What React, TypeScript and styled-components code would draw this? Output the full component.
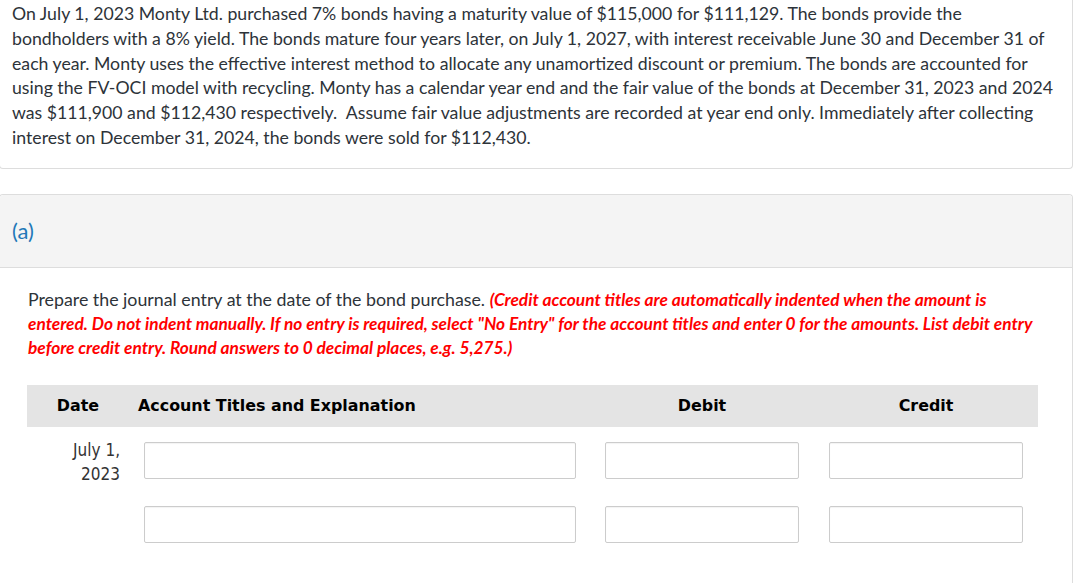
import React from 'react';
import styled, { createGlobalStyle } from 'styled-components';

const GlobalStyle = createGlobalStyle`
  body {
    margin: 0;
    background: #ffffff;
    font-family: Lato, "Noto Sans", sans-serif;
    color: #333333;
  }
`;

const Page = styled.div`
  width: 1074px;
  margin-left: -1px;
`;

const ProblemCard = styled.div`
  border: 1px solid #dddddd;
  border-top: none;
  border-radius: 0 0 4px 4px;
  padding: 2px 12px 17px 12px;
`;

const ProblemText = styled.p`
  margin: 0;
  font-size: 17.7px;
  line-height: 24.8px;
  color: #2d3339;
`;

const PartCard = styled.div`
  margin-top: 25px;
  border: 1px solid #dddddd;
  border-bottom: none;
  border-radius: 4px 4px 0 0;
`;

const PartHeader = styled.div`
  height: 72px;
  display: flex;
  align-items: center;
  padding-left: 12px;
  background: #f4f4f4;
  border-bottom: 1px solid #dddddd;
  border-radius: 4px 4px 0 0;
`;

const PartLabel = styled.span`
  font-size: 22px;
  color: #1f78b8;
`;

const PartBody = styled.div`
  padding: 19px 34px 60px 27px;
`;

const Instructions = styled.p`
  margin: 0 0 0 1px;
  font-size: 17.8px;
  line-height: 24px;
  color: #2d3339;
`;

const Hint = styled.em`
  color: #ff0000;
  font-weight: 700;
  font-size: 17.3px;
  line-height: 18px;
`;

const Table = styled.div`
  margin-top: 26px;
`;

const Grid = styled.div`
  display: grid;
  grid-template-columns: 102px 461px 224px 224px;
`;

const HeadRow = styled(Grid)`
  height: 42px;
  align-items: center;
  background: #e4e4e4;
  font-family: "DejaVu Sans", Verdana, sans-serif;
  font-weight: 700;
  font-size: 15.9px;
  color: #000000;
`;

const HeadCell = styled.div<{ $align: 'left' | 'center' }>`
  text-align: ${(p) => p.$align};
  padding-left: ${(p) => (p.$align === 'left' ? '9px' : '0')};
`;

const Row = styled(Grid)`
  padding: 11px 0 5px;
  align-items: start;
`;

const DateCell = styled.div`
  text-align: right;
  padding-right: 9px;
  font-family: "DejaVu Sans Condensed", "DejaVu Sans", sans-serif;
  font-size: 17px;
  line-height: 24px;
  color: #333333;
`;

const InputCell = styled.div<{ $right: number }>`
  padding: 4px ${(p) => p.$right}px 0 15px;
`;

const Field = styled.input`
  display: block;
  box-sizing: border-box;
  width: 100%;
  height: 37px;
  margin: 0;
  border: 1px solid #cccccc;
  border-radius: 2px;
  background: #ffffff;
  box-shadow: inset 0 1px 1px rgba(0, 0, 0, 0.05);
  outline: none;
`;

const ROWS = [
  { date: ['July 1,', '2023'] },
  { date: [] as string[] },
];

const App = () => (
  <Page>
    <GlobalStyle />
    <ProblemCard>
      <ProblemText>
        On July 1, 2023 Monty Ltd. purchased 7% bonds having a maturity value of $115,000 for
        $111,129. The bonds provide the bondholders with a 8% yield. The bonds mature four years
        later, on July 1, 2027, with interest receivable June 30 and December 31 of each year.
        Monty uses the effective interest method to allocate any unamortized discount or premium.
        The bonds are accounted for using the FV-OCI model with recycling. Monty has a calendar
        year end and the fair value of the bonds at December 31, 2023 and 2024 was $111,900 and
        $112,430 respectively.&nbsp; Assume fair value adjustments are recorded at year end only.
        Immediately after collecting interest on December 31, 2024, the bonds were sold for
        $112,430.
      </ProblemText>
    </ProblemCard>

    <PartCard>
      <PartHeader>
        <PartLabel>(a)</PartLabel>
      </PartHeader>
      <PartBody>
        <Instructions>
          Prepare the journal entry at the date of the bond purchase.{' '}
          <Hint>
            (Credit account titles are automatically indented when the amount is entered. Do not
            indent manually. If no entry is required, select "No Entry" for the account titles and
            enter 0 for the amounts. List debit entry before credit entry. Round answers to 0
            decimal places, e.g. 5,275.)
          </Hint>
        </Instructions>

        <Table>
          <HeadRow>
            <HeadCell $align="center">Date</HeadCell>
            <HeadCell $align="left">Account Titles and Explanation</HeadCell>
            <HeadCell $align="center">Debit</HeadCell>
            <HeadCell $align="center">Credit</HeadCell>
          </HeadRow>
          {ROWS.map((row, i) => (
            <Row key={i}>
              <DateCell>
                {row.date.map((line) => (
                  <div key={line}>{line}</div>
                ))}
              </DateCell>
              <InputCell $right={14}>
                <Field type="text" />
              </InputCell>
              <InputCell $right={15}>
                <Field type="text" />
              </InputCell>
              <InputCell $right={15}>
                <Field type="text" />
              </InputCell>
            </Row>
          ))}
        </Table>
      </PartBody>
    </PartCard>
  </Page>
);

export default App;
